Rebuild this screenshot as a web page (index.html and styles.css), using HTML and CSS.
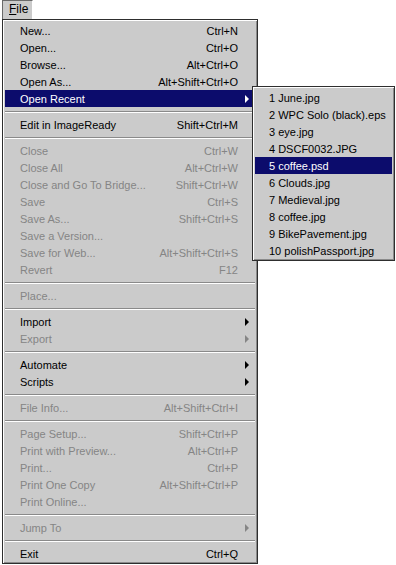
FILE: index.html
```html
<!DOCTYPE html>
<html>
<head>
<meta charset="utf-8">
<link rel="stylesheet" href="styles.css">
</head>
<body>
<div class="screen">
  <div class="menubar">
    <div class="title"><span class="u">F</span>ile</div>
  </div>
  <div class="menu">
    <div class="item"><span class="label">New...</span><span class="key">Ctrl+N</span><span class="sub"></span></div>
    <div class="item"><span class="label">Open...</span><span class="key">Ctrl+O</span><span class="sub"></span></div>
    <div class="item"><span class="label">Browse...</span><span class="key">Alt+Ctrl+O</span><span class="sub"></span></div>
    <div class="item"><span class="label">Open As...</span><span class="key">Alt+Shift+Ctrl+O</span><span class="sub"></span></div>
    <div class="item active"><span class="label">Open Recent</span><span class="key"></span><span class="sub"><i class="arrow"></i></span></div>
    <div class="sep"></div>
    <div class="item"><span class="label">Edit in ImageReady</span><span class="key">Shift+Ctrl+M</span><span class="sub"></span></div>
    <div class="sep"></div>
    <div class="item off"><span class="label">Close</span><span class="key">Ctrl+W</span><span class="sub"></span></div>
    <div class="item off"><span class="label">Close All</span><span class="key">Alt+Ctrl+W</span><span class="sub"></span></div>
    <div class="item off"><span class="label">Close and Go To Bridge...</span><span class="key">Shift+Ctrl+W</span><span class="sub"></span></div>
    <div class="item off"><span class="label">Save</span><span class="key">Ctrl+S</span><span class="sub"></span></div>
    <div class="item off"><span class="label">Save As...</span><span class="key">Shift+Ctrl+S</span><span class="sub"></span></div>
    <div class="item off"><span class="label">Save a Version...</span><span class="key"></span><span class="sub"></span></div>
    <div class="item off"><span class="label">Save for Web...</span><span class="key">Alt+Shift+Ctrl+S</span><span class="sub"></span></div>
    <div class="item off"><span class="label">Revert</span><span class="key">F12</span><span class="sub"></span></div>
    <div class="sep"></div>
    <div class="item off"><span class="label">Place...</span><span class="key"></span><span class="sub"></span></div>
    <div class="sep"></div>
    <div class="item"><span class="label">Import</span><span class="key"></span><span class="sub"><i class="arrow"></i></span></div>
    <div class="item off"><span class="label">Export</span><span class="key"></span><span class="sub"><i class="arrow"></i></span></div>
    <div class="sep"></div>
    <div class="item"><span class="label">Automate</span><span class="key"></span><span class="sub"><i class="arrow"></i></span></div>
    <div class="item"><span class="label">Scripts</span><span class="key"></span><span class="sub"><i class="arrow"></i></span></div>
    <div class="sep"></div>
    <div class="item off"><span class="label">File Info...</span><span class="key">Alt+Shift+Ctrl+I</span><span class="sub"></span></div>
    <div class="sep"></div>
    <div class="item off"><span class="label">Page Setup...</span><span class="key">Shift+Ctrl+P</span><span class="sub"></span></div>
    <div class="item off"><span class="label">Print with Preview...</span><span class="key">Alt+Ctrl+P</span><span class="sub"></span></div>
    <div class="item off"><span class="label">Print...</span><span class="key">Ctrl+P</span><span class="sub"></span></div>
    <div class="item off"><span class="label">Print One Copy</span><span class="key">Alt+Shift+Ctrl+P</span><span class="sub"></span></div>
    <div class="item off"><span class="label">Print Online...</span><span class="key"></span><span class="sub"></span></div>
    <div class="sep"></div>
    <div class="item off"><span class="label">Jump To</span><span class="key"></span><span class="sub"><i class="arrow"></i></span></div>
    <div class="sep"></div>
    <div class="item"><span class="label">Exit</span><span class="key">Ctrl+Q</span><span class="sub"></span></div>

    <div class="submenu">
      <div class="item"><span class="label">1 June.jpg</span></div>
      <div class="item"><span class="label">2 WPC Solo (black).eps</span></div>
      <div class="item"><span class="label">3 eye.jpg</span></div>
      <div class="item"><span class="label">4 DSCF0032.JPG</span></div>
      <div class="item active"><span class="label">5 coffee.psd</span></div>
      <div class="item"><span class="label">6 Clouds.jpg</span></div>
      <div class="item"><span class="label">7 Medieval.jpg</span></div>
      <div class="item"><span class="label">8 coffee.jpg</span></div>
      <div class="item"><span class="label">9 BikePavement.jpg</span></div>
      <div class="item"><span class="label">10 polishPassport.jpg</span></div>
    </div>
  </div>
</div>
</body>
</html>
```

FILE: styles.css
```css
html, body {
  margin: 0;
  padding: 0;
  background: #ffffff;
}

.screen {
  width: 396px;
  height: 565px;
  overflow: hidden;
  padding-left: 2px;
  box-sizing: border-box;
  font-family: "Liberation Sans", Arial, sans-serif;
  font-size: 11px;
  color: #000;
}

.menubar {
  height: 19px;
  display: flex;
}

.title {
  width: 31px;
  height: 19px;
  box-sizing: border-box;
  background: #cbcbcb;
  border-left: 1px solid #6a6a6a;
  border-top: 1px solid #6a6a6a;
  border-right: 1px solid #ffffff;
  padding-left: 6px;
  line-height: 17px;
  font-size: 12px;
}

.u {
  text-decoration: underline;
}

.menu {
  position: relative;
  width: 256px;
  box-sizing: border-box;
  background: #cbcbcb;
  border: 1px solid #2e2e2e;
  box-shadow: inset 1px 1px #ffffff, inset -1px -1px #8a8a8a;
  padding: 2px 2px 1px 2px;
}

.item {
  display: flex;
  align-items: center;
  height: 17px;
  padding-left: 15px;
  white-space: nowrap;
}

.item .label {
  flex: 1;
}

.item .key {
  text-align: right;
}

.item .sub {
  width: 17px;
  height: 17px;
  display: flex;
  align-items: center;
  padding-left: 7px;
  box-sizing: border-box;
}

.arrow {
  display: block;
  width: 0;
  height: 0;
  border-top: 4px solid transparent;
  border-bottom: 4px solid transparent;
  border-left: 4px solid #000;
}

.item.active {
  background: #0c0c6c;
  color: #ffffff;
}

.item.active .arrow {
  border-left-color: #ffffff;
}

.item.off {
  color: #858585;
}

.item.off .arrow {
  border-left-color: #858585;
}

.sep {
  height: 2px;
  margin: 4px 0 3px 0;
  border-top: 1px solid #8a8a8a;
  border-bottom: 1px solid #ffffff;
  box-sizing: border-box;
}

.submenu {
  position: absolute;
  left: 249px;
  top: 66px;
  width: 143px;
  box-sizing: border-box;
  background: #cbcbcb;
  border: 1px solid #2e2e2e;
  box-shadow: inset 1px 1px #ffffff, inset -1px -1px #8a8a8a;
  padding: 2px 2px 1px 2px;
}

.submenu .item {
  padding-left: 14px;
}
```
